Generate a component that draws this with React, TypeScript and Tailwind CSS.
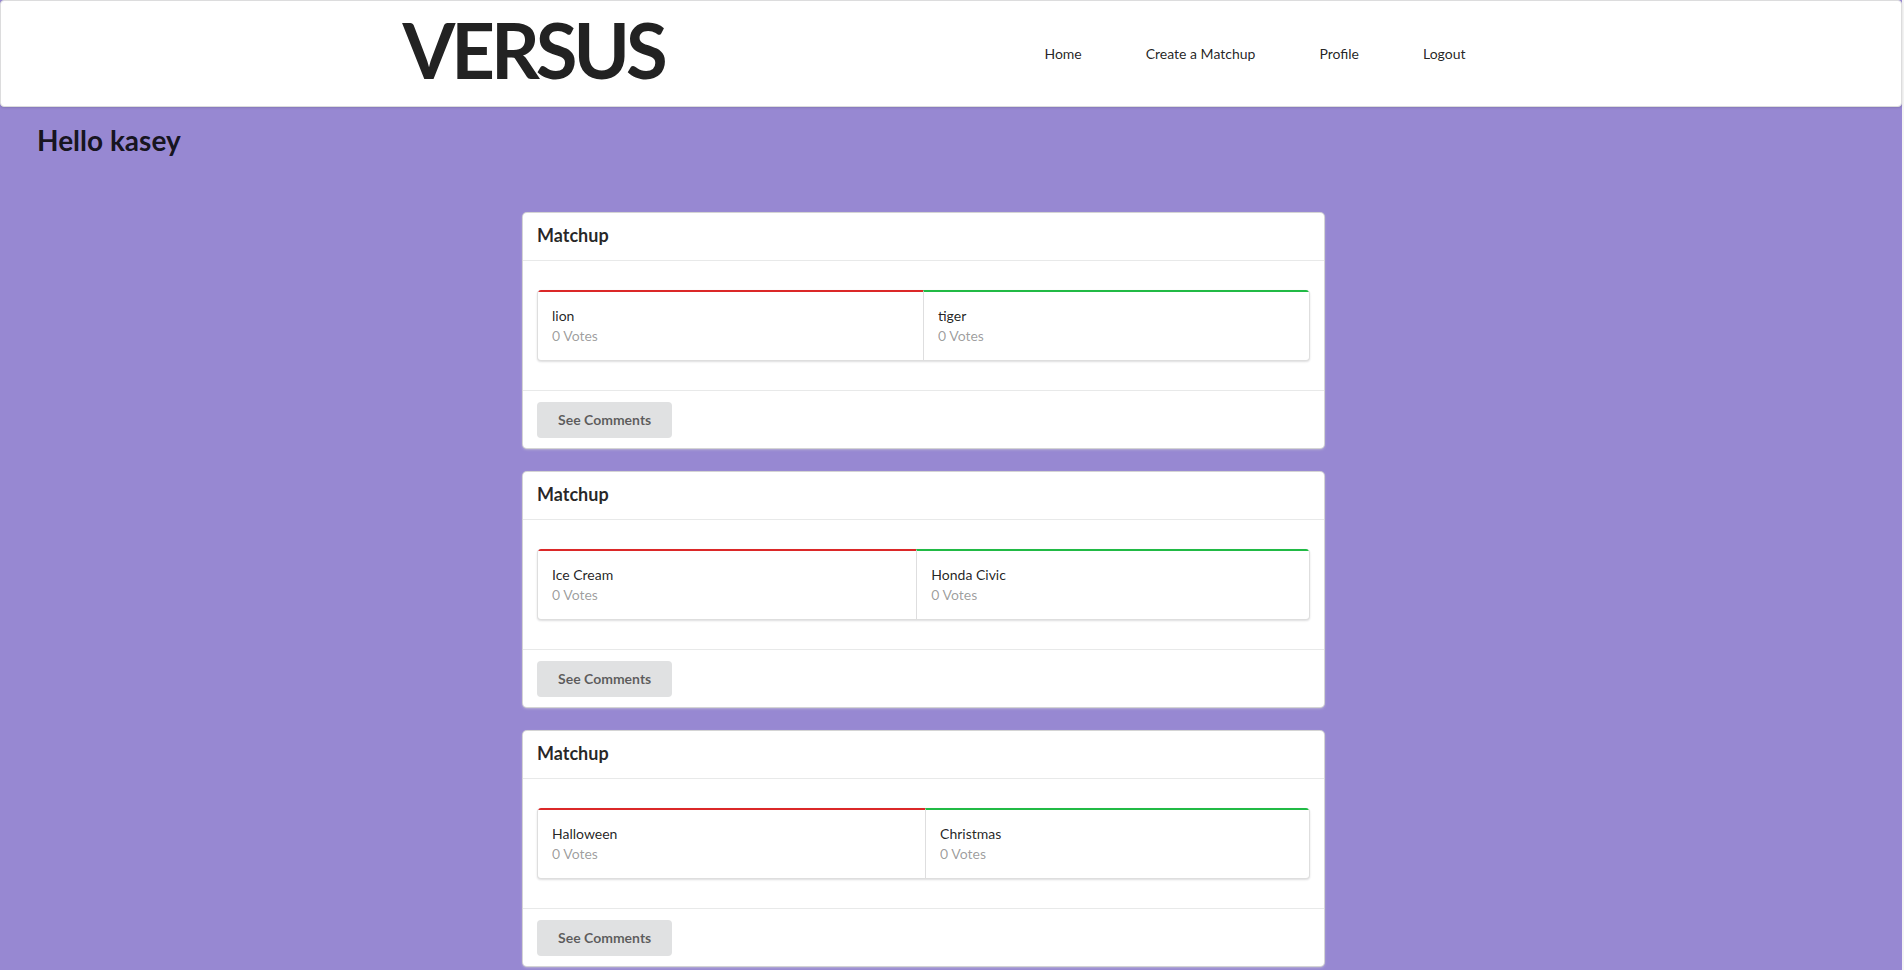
import React from "react";

type Matchup = {
  id: number;
  left: string;
  right: string;
  leftVotes: number;
  rightVotes: number;
};

const matchups: Matchup[] = [
  { id: 1, left: "lion", right: "tiger", leftVotes: 0, rightVotes: 0 },
  { id: 2, left: "Ice Cream", right: "Honda Civic", leftVotes: 0, rightVotes: 0 },
  { id: 3, left: "Halloween", right: "Christmas", leftVotes: 0, rightVotes: 0 },
];

const navLinks = ["Home", "Create a Matchup", "Profile", "Logout"];

function Header() {
  return (
    <header className="h-[107px] rounded-[4px] border border-[#dcdcdd] bg-white shadow-[0_1px_2px_0_rgba(34,36,38,0.15)]">
      <div className="mx-auto flex h-full w-[1127px] items-center pl-[15px] pr-[17px]">
        {/* Logo */}
        <h1 className="mb-[8px] text-[76px] font-bold leading-none tracking-[-4px] text-[#222222]">VERSUS</h1>

        {/* Nav */}
        <nav className="ml-auto flex items-center" aria-label="Main navigation">
          {navLinks.map((label) => (
            <a
              key={label}
              href="#"
              className="whitespace-nowrap px-8 py-[13px] text-[14px] leading-none text-[rgba(0,0,0,0.87)]"
            >
              {label}
            </a>
          ))}
        </nav>
      </div>
    </header>
  );
}

function Side({ name, votes, color }: { name: string; votes: number; color: "red" | "green" }) {
  return (
    <div
      className={
        color === "red"
          ? "flex-auto border-t-2 border-t-[#db2828] px-[14px] py-[14px]"
          : "flex-auto border-t-2 border-l border-t-[#21ba45] border-l-[rgba(34,36,38,0.15)] px-[14px] py-[14px]"
      }
    >
      <div className="text-[14px] leading-[20px] text-[rgba(0,0,0,0.87)]">{name}</div>
      <div className="text-[14px] leading-[20px] text-[rgba(0,0,0,0.4)]">{votes} Votes</div>
    </div>
  );
}

function MatchupCard({ m }: { m: Matchup }) {
  return (
    <div className="w-[801px] rounded-[4px] bg-white shadow-[0_1px_3px_0_#d4d4d5,0_0_0_1px_#d4d4d5]">
      <div className="px-[14px] pt-[11px] pb-[13px]">
        <div className="text-[18px] font-bold leading-[23px] text-[rgba(0,0,0,0.85)]">Matchup</div>
      </div>
      <div className="border-t border-[rgba(34,36,38,0.1)] px-[14px] pt-[29px] pb-[29px]">
        {/* Horizontal segments */}
        <div className="flex overflow-hidden rounded-[4px] border-x border-b border-[rgba(34,36,38,0.15)] shadow-[0_1px_2px_0_rgba(34,36,38,0.15)]">
          <Side name={m.left} votes={m.leftVotes} color="red" />
          <Side name={m.right} votes={m.rightVotes} color="green" />
        </div>
      </div>
      <div className="border-t border-[rgba(34,36,38,0.1)] px-[14px] pt-[11px] pb-[10px]">
        <button className="rounded-[4px] bg-[#e0e1e2] px-[21px] py-[11px] text-[14px] font-bold leading-[14px] text-[rgba(0,0,0,0.6)]">
          See Comments
        </button>
      </div>
    </div>
  );
}

export default function App() {
  return (
    <div className="min-h-screen bg-[#f4f4f4] font-['Lato',_'Liberation_Sans',_sans-serif]">
      <div className="min-h-screen w-[1902px] bg-[#9788d2]">
        <Header />
        <h2 className="mt-[15px] pl-[37px] text-[28px] font-bold leading-[36px] text-[rgba(0,0,0,0.87)]">
          Hello kasey
        </h2>
        <main className="mt-[55px] ml-[523px] flex flex-col gap-6 pb-6">
          {matchups.map((m) => (
            <MatchupCard key={m.id} m={m} />
          ))}
        </main>
      </div>
    </div>
  );
}
